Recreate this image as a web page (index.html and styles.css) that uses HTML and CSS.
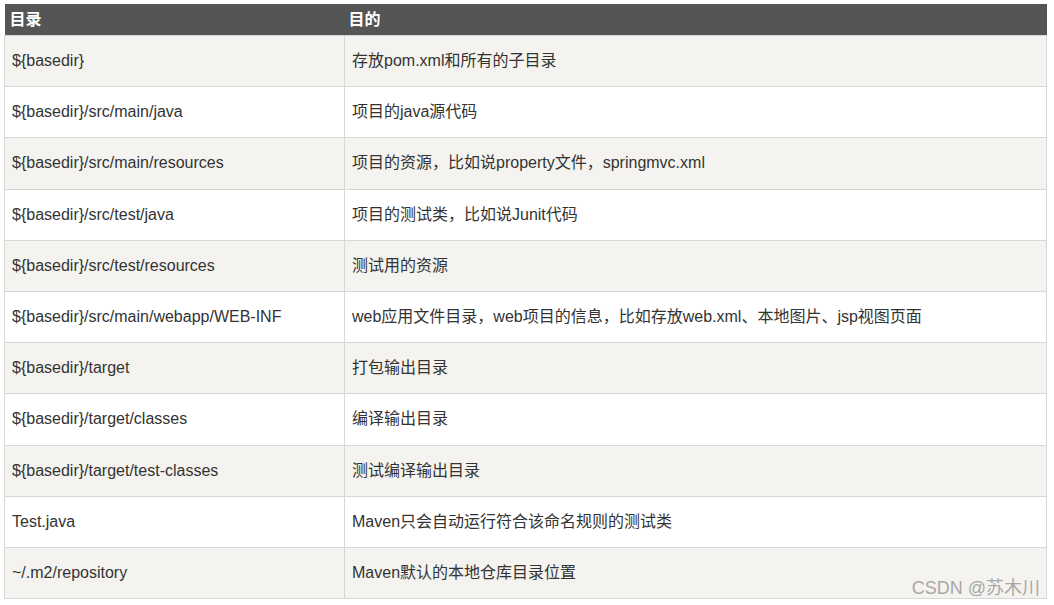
FILE: index.html
```html
<!DOCTYPE html>
<html lang="zh-CN">
<head>
<meta charset="utf-8">
<title>Maven 目录结构</title>
<link rel="stylesheet" href="styles.css">
</head>
<body>
<div class="wrap">
<table class="dirs">
  <thead>
    <tr><th class="c1">目录</th><th class="c2">目的</th></tr>
  </thead>
  <tbody>
    <tr><td>${basedir}</td><td>存放pom.xml和所有的子目录</td></tr>
    <tr><td>${basedir}/src/main/java</td><td>项目的java源代码</td></tr>
    <tr><td>${basedir}/src/main/resources</td><td>项目的资源，比如说property文件，springmvc.xml</td></tr>
    <tr><td>${basedir}/src/test/java</td><td>项目的测试类，比如说Junit代码</td></tr>
    <tr><td>${basedir}/src/test/resources</td><td>测试用的资源</td></tr>
    <tr><td>${basedir}/src/main/webapp/WEB-INF</td><td>web应用文件目录，web项目的信息，比如存放web.xml、本地图片、jsp视图页面</td></tr>
    <tr><td>${basedir}/target</td><td>打包输出目录</td></tr>
    <tr><td>${basedir}/target/classes</td><td>编译输出目录</td></tr>
    <tr><td>${basedir}/target/test-classes</td><td>测试编译输出目录</td></tr>
    <tr><td>Test.java</td><td>Maven只会自动运行符合该命名规则的测试类</td></tr>
    <tr><td>~/.m2/repository</td><td>Maven默认的本地仓库目录位置</td></tr>
  </tbody>
</table>
<div class="watermark">CSDN @苏木川</div>
</div>
</body>
</html>
```
FILE: styles.css
```css
html, body {
  margin: 0;
  padding: 0;
  background: #ffffff;
}
body {
  font-family: "Liberation Sans", Arial, "Noto Sans CJK SC", sans-serif;
  color: #333333;
}
.wrap {
  position: relative;
  padding: 4px 0 0 4px;
  width: 1043px;
}
.dirs {
  width: 1043px;
  border-collapse: collapse;
  table-layout: fixed;
  font-size: 16px;
}
.dirs th {
  background: #555555;
  color: #ffffff;
  font-weight: bold;
  text-align: left;
  height: 31px;
  padding: 0 5px;
  font-size: 16px;
  line-height: 20px;
  border: none;
}
.dirs th.c1 { width: 330px; padding-left: 5px; }
.dirs th.c2 { padding-left: 4px; }
.dirs td {
  height: 50.2px;
  padding: 0 7px;
  border: 1px solid #d7d7d7;
  vertical-align: middle;
  line-height: 20px;
  white-space: nowrap;
}
.dirs tbody tr:nth-child(odd) td { background: #f4f3ef; }
.dirs tbody tr:nth-child(even) td { background: #ffffff; }
.watermark {
  position: absolute;
  right: 7px;
  bottom: 0;
  font-size: 18px;
  color: #a8a8a8;
  font-family: "Liberation Sans", Arial, "Noto Sans CJK SC", sans-serif;
}
```
